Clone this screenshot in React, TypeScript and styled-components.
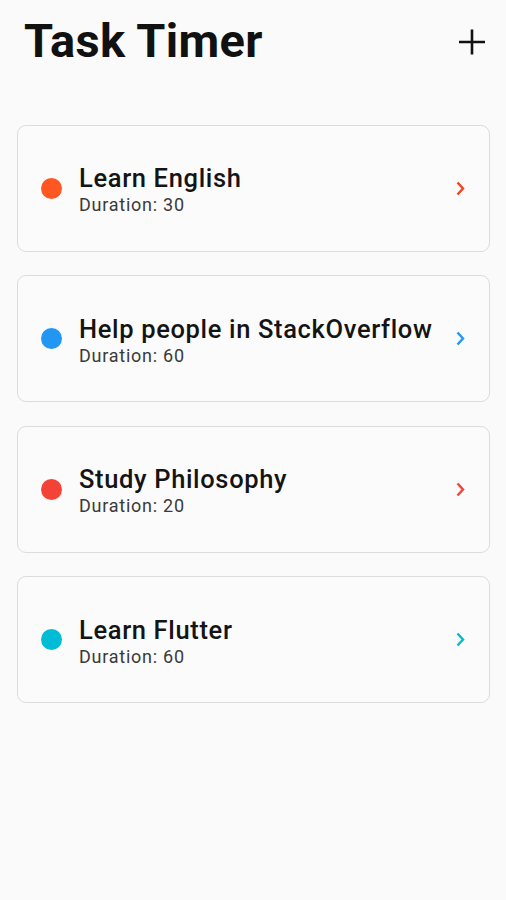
import React from "react";
import styled, { createGlobalStyle } from "styled-components";

const GlobalStyle = createGlobalStyle`
  html, body {
    margin: 0;
    padding: 0;
    background: #fafafa;
  }
  body {
    font-family: Roboto, "Noto Sans", Arial, sans-serif;
    -webkit-font-smoothing: antialiased;
  }
`;

const Page = styled.div`
  min-height: 900px;
  background: #fafafa;
  display: flex;
  flex-direction: column;
`;

const Header = styled.header`
  display: flex;
  align-items: center;
  justify-content: space-between;
  padding: 13px 20px 0 24px;
  height: 56px;
`;

const Title = styled.h1`
  margin: 0;
  font-size: 47px;
  line-height: 56px;
  font-weight: 700;
  color: #111;
  letter-spacing: 0.35px;
`;

const AddButton = styled.button`
  border: none;
  background: transparent;
  padding: 0;
  width: 28px;
  height: 28px;
  display: flex;
  align-items: center;
  justify-content: center;
  cursor: pointer;
  margin-top: 2px;
`;

const List = styled.ul`
  list-style: none;
  margin: 55.5px 16px 0 17px;
  padding: 0;
  display: flex;
  flex-direction: column;
  gap: 23.5px;
`;

const Card = styled.li`
  box-sizing: border-box;
  height: 127px;
  border: 1px solid #dcdcdc;
  border-radius: 9px;
  background: #fbfbfb;
  display: flex;
  align-items: center;
  padding: 0 24px 0 23px;
`;

const Dot = styled.span<{ $color: string }>`
  width: 21px;
  height: 21px;
  border-radius: 50%;
  background: ${(p) => p.$color};
  flex-shrink: 0;
`;

const TextBlock = styled.div`
  flex: 1;
  margin-left: 17px;
  margin-top: 4px;
  display: flex;
  flex-direction: column;
  min-width: 0;
`;

const TaskName = styled.span`
  font-size: 25.5px;
  line-height: 30px;
  font-weight: 500;
  color: #141414;
  letter-spacing: 0.65px;
  white-space: nowrap;
`;

const Duration = styled.span`
  font-size: 18px;
  line-height: 24px;
  font-weight: 400;
  color: #3a3a3a;
  letter-spacing: 0.75px;
`;

const Chevron = styled.svg`
  flex-shrink: 0;
  margin-left: 8px;
`;

const tasks = [
  { name: "Learn English", duration: 30, color: "#ff5722", arrow: "#f4411f" },
  { name: "Help people in StackOverflow", duration: 60, color: "#2196f3", arrow: "#2196f3" },
  { name: "Study Philosophy", duration: 20, color: "#f44336", arrow: "#f44336" },
  { name: "Learn Flutter", duration: 60, color: "#00bcd4", arrow: "#00bcd4" },
];

export default function App() {
  return (
    <Page>
      <GlobalStyle />
      <Header>
        <Title>Task Timer</Title>
        <AddButton aria-label="Add task">
          <svg width="28" height="28" viewBox="0 0 28 28">
            <path d="M14 1.5V26.5M1 14H27" stroke="#111" strokeWidth="2.6" fill="none" />
          </svg>
        </AddButton>
      </Header>
      <List>
        {tasks.map((t) => (
          <Card key={t.name}>
            <Dot $color={t.color} />
            <TextBlock>
              <TaskName>{t.name}</TaskName>
              <Duration>Duration: {t.duration}</Duration>
            </TextBlock>
            <Chevron width="9" height="15" viewBox="0 0 9 15">
              <path d="M1.5 1.5L7 7.5L1.5 13.5" stroke={t.arrow} strokeWidth="2.4" fill="none" />
            </Chevron>
          </Card>
        ))}
      </List>
    </Page>
  );
}
